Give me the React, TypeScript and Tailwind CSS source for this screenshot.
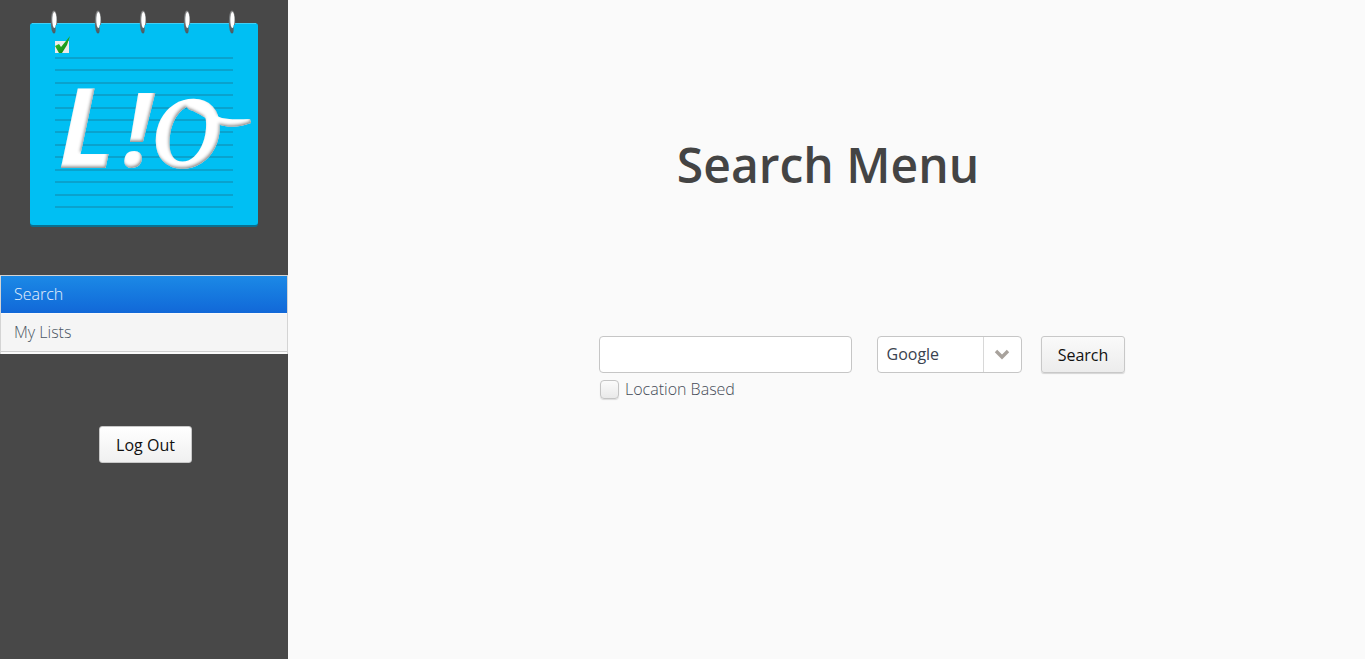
const RING_XS = [54, 98, 143, 187, 232];
const LINE_YS = [58, 70, 83, 95, 108, 120, 132, 145, 157, 170, 182, 195, 207];

function Logo() {
  return (
    <svg width="288" height="240" viewBox="0 0 288 240" className="block">
      <defs>
        <linearGradient id="ring" x1="0" y1="0" x2="0" y2="1">
          <stop offset="0" stopColor="#8c8c8c" />
          <stop offset="1" stopColor="#4c5a60" />
        </linearGradient>
        <linearGradient id="check" x1="0" y1="0" x2="1" y2="1">
          <stop offset="0" stopColor="#3fd02c" />
          <stop offset="1" stopColor="#067a12" />
        </linearGradient>
        {/* soft grey edge on the lower right of the lettering */}
        <filter id="bevel" x="-5%" y="-5%" width="110%" height="110%">
          <feOffset in="SourceAlpha" dx="-1.5" dy="-2.5" result="off" />
          <feGaussianBlur in="off" stdDeviation="1.4" result="blur" />
          <feComposite in="SourceAlpha" in2="blur" operator="out" result="edge" />
          <feFlood floodColor="#8f8f8f" />
          <feComposite in2="edge" operator="in" result="shade" />
          <feMerge>
            <feMergeNode in="SourceGraphic" />
            <feMergeNode in="shade" />
          </feMerge>
        </filter>
      </defs>

      {/* Notepad */}
      <rect x="30" y="24" width="228" height="203" rx="3" fill="#0a6f8e" />
      <rect x="30" y="23" width="228" height="202" rx="3" fill="#00bff3" />
      <rect x="32" y="23" width="224" height="1" fill="#3fd0f7" />

      {LINE_YS.map((y) => (
        <rect key={y} x="55" y={y - 0.5} width="178" height="1" fill="#1585a8" />
      ))}

      {/* Spiral rings */}
      {RING_XS.map((x) => (
        <g key={x}>
          <ellipse cx={x} cy="22" rx="3.2" ry="11.5" fill="url(#ring)" />
          <ellipse cx={x + 0.4} cy="20" rx="2.1" ry="8" fill="#ffffff" />
          <rect x={x + 1.6} y="25" width="3" height="9" fill="#00bff3" />
        </g>
      ))}

      {/* Check box */}
      <rect x="55" y="41" width="14" height="12" fill="#ececec" />
      <path d="M55 46 L59 44 L61 47 L70 36 L67 45 L62 53 L59 53 Z" fill="url(#check)" />

      {/* Wordmark */}
      <g filter="url(#bevel)" fill="#ffffff">
        <text x="58" y="168" style={{ fontFamily: '"Open Sans", sans-serif', fontStyle: 'italic' }}>
          <tspan fontSize="112" fontWeight="700">L</tspan>
          <tspan fontSize="102" fontWeight="700" dx="7" dy="-1">!</tspan>
          <tspan fontSize="142" fontWeight="400" stroke="#ffffff" strokeWidth="1.5" style={{ fontFamily: '"Liberation Serif", serif' }}>o</tspan>
        </text>
        <path d="M187 106 C188 102 194 102 199 105 C207 109 213 115 222 118 C232 120 241 119 250 119 L251 123 C241 127 230 128 220 125 C208 121 198 112 190 110 C188 109 187 108 187 106 Z" />
      </g>
    </svg>
  );
}

function Sidebar() {
  return (
    <aside className="w-[288px] shrink-0 bg-[#484848] flex flex-col">
      <Logo />
      <nav className="mt-[35px] bg-[#fafafa] border-x border-t border-[#d4d4d4] pb-[2px] text-[16px] font-light leading-[37px]">
        <div className="h-[37px] pl-[13px] text-white/90 bg-gradient-to-b from-[#1c89e6] to-[#1268d8]">Search</div>
        <div className="h-[38px] pl-[13px] mt-px text-[#4a5563] bg-[#f5f5f5] border-b border-[#cfcfcf]">My Lists</div>
      </nav>
      <div className="mt-[72px] flex justify-center pl-[3px]">
        <button className="w-[93px] h-[37px] rounded-[3px] border border-[#c8c8c8] bg-gradient-to-b from-white to-[#f0f0f0] text-[16px] text-[#111]">
          Log Out
        </button>
      </div>
    </aside>
  );
}

function SearchForm() {
  return (
    <div className="mt-[138px] ml-[311px]">
      <div className="flex items-start">
        <input
          type="text"
          className="w-[253px] h-[37px] rounded-[4px] border border-[#c6c6c6] bg-white outline-none"
        />
        <div className="ml-[25px] w-[145px] h-[37px] rounded-[4px] border border-[#c6c6c6] bg-white flex">
          <span className="flex-1 pl-[8.5px] text-[16px] leading-[35px] text-[#3a4350]">Google</span>
          <span className="w-[38px] border-l border-[#d8d8d8] flex items-center justify-center pr-px">
            <svg width="16" height="11" viewBox="0 0 16 11">
              <polyline points="2,2 8,8 14,2" fill="none" stroke="#a8a29c" strokeWidth="3.4" />
            </svg>
          </span>
        </div>
        <button className="ml-[19px] w-[84px] h-[37px] rounded-[3px] border border-[#c8c8c8] bg-gradient-to-b from-[#fafafa] to-[#ececec] shadow-[0_1px_1px_rgba(0,0,0,0.15)] text-[16px] text-[#111]">
          Search
        </button>
      </div>
      <label className="mt-[7px] ml-px flex items-center gap-[6px] text-[16px] font-light text-[#454c58] leading-[19px]">
        <span className="w-[19px] h-[19px] rounded-[4px] border border-[#c4c4c4] bg-gradient-to-b from-[#fbfbfb] to-[#e9e9e9] shadow-[0_1px_1px_rgba(0,0,0,0.12)]" />
        Location Based
      </label>
    </div>
  );
}

export default function App() {
  return (
    <div className="flex h-[659px] w-full overflow-hidden bg-[#fafafa] font-['Open_Sans',sans-serif]">
      <Sidebar />
      <main className="flex-1">
        <h1 className="mt-[132px] pl-[3px] text-center text-[48px] leading-[66px] font-semibold text-[#444444]">
          Search Menu
        </h1>
        <SearchForm />
      </main>
    </div>
  );
}
